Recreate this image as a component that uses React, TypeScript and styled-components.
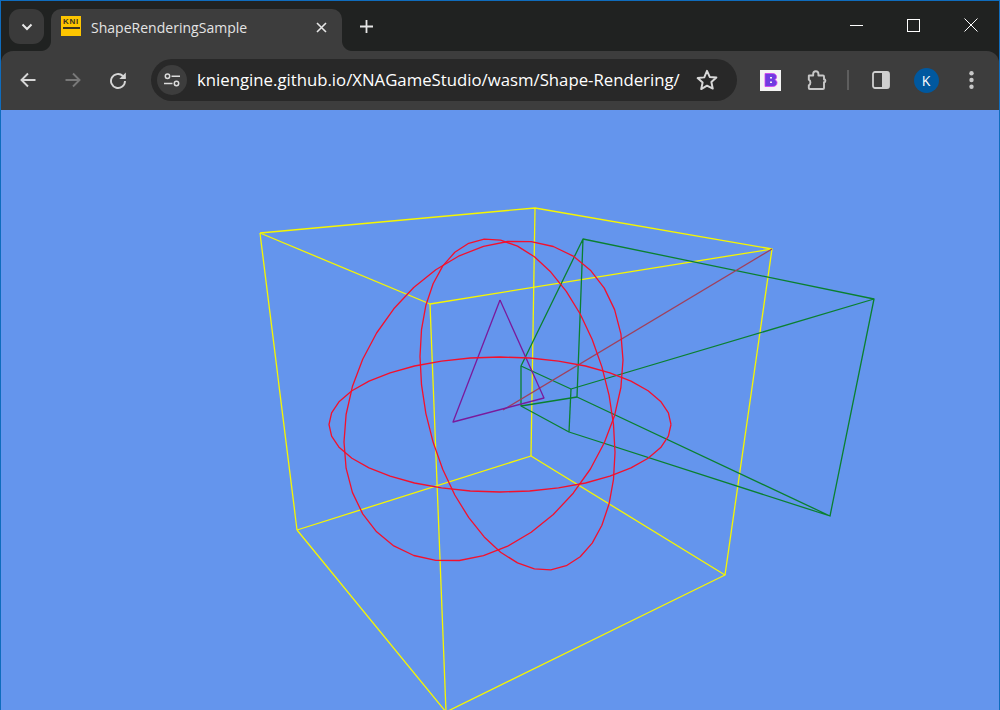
import React from "react";
import styled, { createGlobalStyle } from "styled-components";

const Global = createGlobalStyle`
  html, body { margin: 0; padding: 0; height: 710px; overflow: hidden; background: #202221; }
  #root { height: 710px; }
`;

const Frame = styled.div`
  box-sizing: border-box;
  width: 1000px;
  height: 710px;
  display: flex;
  flex-direction: column;
  border: 1px solid #0f6cbd;
  border-bottom: 0;
  background: #202221;
  font-family: "Open Sans", "Noto Sans", sans-serif;
  overflow: hidden;
`;

const TabStrip = styled.div`
  height: 50px;
  flex: none;
  display: flex;
  align-items: flex-start;
  padding: 8px 0 0 8px;
  box-sizing: border-box;
`;

const TabSearch = styled.button`
  width: 35px;
  height: 35px;
  flex: none;
  border: 0;
  padding: 0;
  margin-right: 7px;
  border-radius: 11px;
  background: #3a3a3a;
  display: flex;
  align-items: center;
  justify-content: center;
`;

const Tab = styled.div`
  position: relative;
  width: 291px;
  height: 42px;
  flex: none;
  box-sizing: border-box;
  padding: 0 15px 4px 10px;
  display: flex;
  align-items: center;
  background: #3d3d3d;
  border-radius: 10px 10px 0 0;
  &::before, &::after {
    content: "";
    position: absolute;
    bottom: 0;
    width: 10px;
    height: 10px;
  }
  &::before { left: -10px; background: radial-gradient(circle at 0 0, #202221 9.5px, #3d3d3d 10.5px); }
  &::after { right: -10px; background: radial-gradient(circle at 100% 0, #202221 9.5px, #3d3d3d 10.5px); }
`;

const Favicon = styled.div`
  width: 20px;
  height: 20px;
  flex: none;
  margin-bottom: 4px;
  background: #fdc500;
  box-sizing: border-box;
  padding-top: 3px;
  display: flex;
  flex-direction: column;
  align-items: center;
`;

const FaviconText = styled.span`
  font: 700 8px/6px "Liberation Sans", sans-serif;
  color: #3a3320;
  letter-spacing: 0.8px;
`;

const FaviconBar = styled.span`
  width: 17px;
  height: 2px;
  margin-top: 2px;
  background: #3a3320;
`;

const TabTitle = styled.span`
  margin-left: 10px;
  flex: 1;
  font-size: 14px;
  line-height: 20px;
  color: #e4e4e4;
  white-space: nowrap;
  letter-spacing: 0.02px;
`;

const NewTab = styled.button`
  width: 28px;
  height: 28px;
  margin: 3px 0 0 10px;
  flex: none;
  padding: 0;
  border: 0;
  background: none;
  display: flex;
  align-items: center;
  justify-content: center;
`;

const Spacer = styled.div`
  flex: 1;
`;

const WindowButton = styled.div`
  width: 57px;
  height: 34px;
  margin-top: -1px;
  flex: none;
  display: flex;
  align-items: center;
  justify-content: center;
`;

const Toolbar = styled.div`
  height: 59px;
  flex: none;
  box-sizing: border-box;
  display: flex;
  align-items: center;
  padding: 0 0 1px 9px;
  background: #3d3d3d;
  border-radius: 12px 12px 0 0;
`;

const NavButton = styled.div`
  width: 36px;
  height: 36px;
  margin-right: 9px;
  flex: none;
  display: flex;
  align-items: center;
  justify-content: center;
`;

const Omnibox = styled.div`
  width: 586px;
  height: 42px;
  margin-left: 6px;
  flex: none;
  box-sizing: border-box;
  padding: 0 18px 0 6px;
  display: flex;
  align-items: center;
  border-radius: 21px;
  background: #282828;
`;

const SiteInfo = styled.div`
  width: 30px;
  height: 30px;
  flex: none;
  border-radius: 50%;
  background: #3d3d3d;
  display: flex;
  align-items: center;
  justify-content: center;
`;

const Url = styled.span`
  margin-left: 10px;
  flex: 1;
  font-size: 16.75px;
  line-height: 24px;
  color: #ffffff;
  white-space: nowrap;
`;

const ActionSlot = styled.div<{ $w: number }>`
  width: ${(p) => p.$w}px;
  height: 36px;
  flex: none;
  display: flex;
  align-items: center;
  justify-content: center;
`;

const Separator = styled.div`
  width: 2px;
  height: 20px;
  flex: none;
  margin: 0 15px 0 16px;
  background: #5e5e5e;
`;

const Avatar = styled.div`
  width: 25px;
  height: 25px;
  border-radius: 50%;
  background: #00589f;
  color: #fff;
  font-size: 14px;
  display: flex;
  align-items: center;
  justify-content: center;
`;

const Viewport = styled.div`
  flex: 1;
  min-height: 0;
  background: #6495ed;
`;

const Scene = styled.svg`
  display: block;
  width: 998px;
  height: 600px;
`;

const Wire = styled.polyline<{ $c: string }>`
  fill: none;
  stroke: ${(p) => p.$c};
  stroke-width: 1.3;
  stroke-linejoin: round;
`;

const Ico = styled.svg`
  display: block;
  fill: none;
`;

const CloseIcon = styled(Ico)`
  margin-bottom: 2px;
`;

const yellow = "#f6f600";
const green = "#0a8030";
const red = "#f4102c";
const purple = "#7a1a9c";

// A projected circle: x = cx + X cos t, y = cy + Yc cos t + Ys sin t, drawn in straight segments.
function ring(cx: number, cy: number, X: number, Yc: number, Ys: number, n = 36): string {
  const out: string[] = [];
  for (let i = 0; i <= n; i++) {
    const t = (i / n) * Math.PI * 2;
    const x = cx + X * Math.cos(t);
    const y = cy + Yc * Math.cos(t) + Ys * Math.sin(t);
    out.push(`${x.toFixed(1)},${y.toFixed(1)}`);
  }
  return out.join(" ");
}

const wires: { c: string; p: string }[] = [
  { c: yellow, p: "260,233 535,208 772,249 430,304 260,233" },
  { c: yellow, p: "297,530 531,456 725,575 446,712 297,530" },
  { c: yellow, p: "260,233 297,530" },
  { c: yellow, p: "535,208 531,456" },
  { c: yellow, p: "772,249 725,575" },
  { c: yellow, p: "430,304 446,712" },
  { c: green, p: "583,239 874,299 830,516 569,432 521,406 521,366 583,239 577,397 830,516" },
  { c: green, p: "521,366 571,389 874,299" },
  { c: green, p: "571,389 569,432" },
  { c: green, p: "521,406 577,397" },
  { c: "#a0405c", p: "772,249 503,410" },
  { c: purple, p: "500,300 544,398 453,422 500,300" },
  { c: red, p: ring(500, 424.5, 171, 0, 67.5) },
  { c: red, p: ring(483.5, 401, 139.5, -41, 154.7) },
  { c: red, p: ring(517.5, 404.5, 97.5, 48, 158.4) },
];

export default function App() {
  return (
    <Frame>
      <Global />
      <TabStrip>
        <TabSearch>
          <Ico width="12" height="8" viewBox="0 0 12 8">
            <path d="M1.5 1.5 6 6l4.5-4.5" stroke="#e8e8e8" strokeWidth="2" />
          </Ico>
        </TabSearch>
        <Tab>
          <Favicon>
            <FaviconText>KNI</FaviconText>
            <FaviconBar />
          </Favicon>
          <TabTitle>ShapeRenderingSample</TabTitle>
          <CloseIcon width="11" height="11" viewBox="0 0 11 11">
            <path d="M1 1l9 9M10 1l-9 9" stroke="#e6e6e6" strokeWidth="1.6" />
          </CloseIcon>
        </Tab>
        <NewTab>
          <Ico width="13" height="13" viewBox="0 0 13 13">
            <path d="M6.5 0v13M0 6.5h13" stroke="#e6e6e6" strokeWidth="1.8" />
          </Ico>
        </NewTab>
        <Spacer />
        <WindowButton>
          <Ico width="13" height="2" viewBox="0 0 13 2">
            <path d="M0 1.5h13" stroke="#fff" strokeWidth="1" />
          </Ico>
        </WindowButton>
        <WindowButton>
          <Ico width="13" height="13" viewBox="0 0 13 13">
            <rect x=".5" y=".5" width="12" height="12" stroke="#fff" />
          </Ico>
        </WindowButton>
        <WindowButton>
          <Ico width="14" height="14" viewBox="0 0 14 14">
            <path d="M.5.5l13 13M13.5.5l-13 13" stroke="#fff" strokeWidth="1" />
          </Ico>
        </WindowButton>
      </TabStrip>
      <Toolbar>
        <NavButton>
          <Ico width="16" height="16" viewBox="0 0 16 16">
            <path d="M15.5 8H2M8 1.5 1.5 8 8 14.5" stroke="#d6d6d6" strokeWidth="1.9" />
          </Ico>
        </NavButton>
        <NavButton>
          <Ico width="16" height="16" viewBox="0 0 16 16">
            <path d="M.5 8H14M8 1.5 14.5 8 8 14.5" stroke="#787878" strokeWidth="1.9" />
          </Ico>
        </NavButton>
        <NavButton>
          <Ico width="18" height="18" viewBox="0 0 18 18">
            <path d="M16 10a7 7 0 1 1-2.1-5L16 7" stroke="#d6d6d6" strokeWidth="1.9" />
            <path d="M16.8 1.5V8H10.3" fill="#d6d6d6" />
          </Ico>
        </NavButton>
        <Omnibox>
          <SiteInfo>
            <Ico width="16" height="14" viewBox="0 0 16 14">
              <circle cx="3.5" cy="3.2" r="2.2" stroke="#dcdcdc" strokeWidth="1.5" />
              <path d="M7.5 3.2H16M0 10.5h8.5" stroke="#dcdcdc" strokeWidth="1.6" />
              <circle cx="12.5" cy="10.5" r="2.2" stroke="#dcdcdc" strokeWidth="1.5" />
            </Ico>
          </SiteInfo>
          <Url>kniengine.github.io/XNAGameStudio/wasm/Shape-Rendering/</Url>
          <Ico width="24" height="24" viewBox="0 0 22 22">
            <path
              d="M11 2.6l2.5 5.6 6.1.6-4.6 4.1 1.3 6L11 16.2l-5.3 3.1 1.3-6-4.6-4.1 6.1-.6z"
              stroke="#d8d8d8"
              strokeWidth="1.8"
              strokeLinejoin="round"
            />
          </Ico>
        </Omnibox>
        <ActionSlot $w={66}>
          <Ico width="21" height="21" viewBox="0 0 21 21">
            <rect width="21" height="21" fill="#f4f4f4" />
            <path
              d="M5 3.5h7.5c2.5 0 4 1.3 4 3.4 0 1.4-.7 2.3-1.7 2.8 1.4.5 2.2 1.6 2.2 3.1 0 2.4-1.7 3.7-4.5 3.7H5z"
              fill="#6f3ce0"
              stroke="#d53cf0"
              strokeWidth=".8"
            />
            <rect x="10" y="7" width="2" height="1.5" fill="#f4f4f4" />
            <rect x="10" y="11.5" width="2" height="1.5" fill="#f4f4f4" />
          </Ico>
        </ActionSlot>
        <ActionSlot $w={28}>
          <Ico width="22" height="22" viewBox="0 0 22 22">
            <path
              d="M3 6.5h4.2V4.8a2.6 2.6 0 0 1 5.2 0v1.7h4.6a1 1 0 0 1 1 1v3h1a2.4 2.4 0 0 1 0 2.6h-1V19a1 1 0 0 1-1 1H3.8a1 1 0 0 1-1-1v-2.7a3 3 0 0 0 1.6-2.8 3 3 0 0 0-1.6-2.8V7.5a1 1 0 0 1 .2-1z"
              stroke="#c8c8c8"
              strokeWidth="1.9"
              strokeLinejoin="round"
            />
          </Ico>
        </ActionSlot>
        <Separator />
        <ActionSlot $w={34}>
          <Ico width="18" height="18" viewBox="0 0 18 18">
            <rect x="1" y="1" width="16" height="16" rx="2" stroke="#cfcfcf" strokeWidth="1.8" />
            <path d="M10 1h5a2 2 0 0 1 2 2v12a2 2 0 0 1-2 2h-5z" fill="#cfcfcf" />
          </Ico>
        </ActionSlot>
        <ActionSlot $w={56}>
          <Avatar>K</Avatar>
        </ActionSlot>
        <ActionSlot $w={34}>
          <Ico width="5" height="18" viewBox="0 0 5 18">
            <circle cx="2.5" cy="2.2" r="2.2" fill="#c8c8c8" />
            <circle cx="2.5" cy="9" r="2.2" fill="#c8c8c8" />
            <circle cx="2.5" cy="15.8" r="2.2" fill="#c8c8c8" />
          </Ico>
        </ActionSlot>
      </Toolbar>
      <Viewport>
        <Scene viewBox="1 110 998 600">
          {wires.map((w, i) => (
            <Wire key={i} $c={w.c} points={w.p} />
          ))}
        </Scene>
      </Viewport>
    </Frame>
  );
}
